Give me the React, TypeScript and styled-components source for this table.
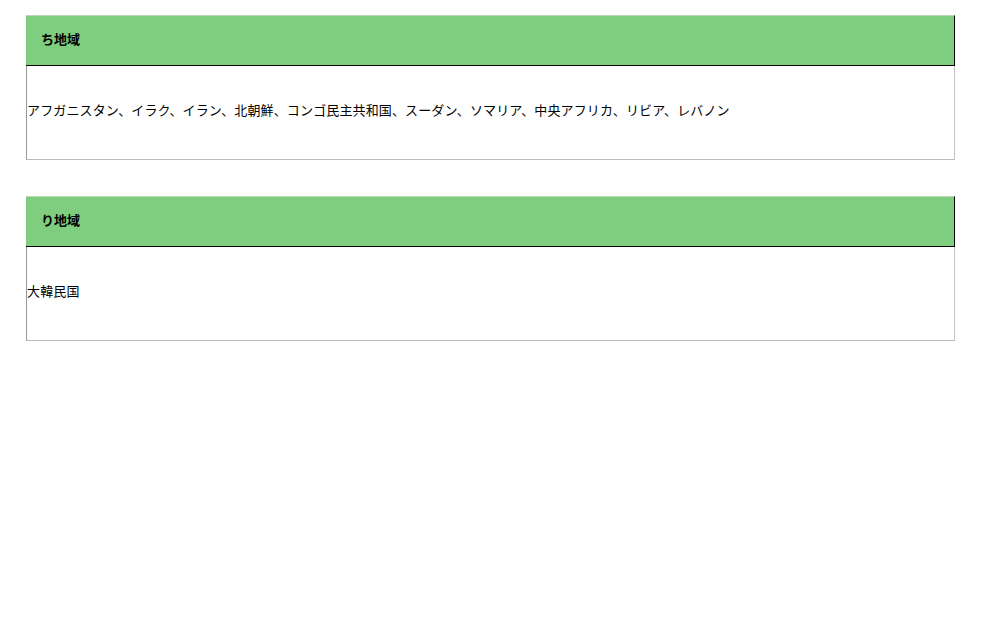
import styled, { createGlobalStyle } from "styled-components";

const GlobalStyle = createGlobalStyle`
  body {
    margin: 0;
    background: #fff;
    font-family: "Noto Sans CJK JP", "Noto Sans", sans-serif;
    color: #000;
  }
`;

const Page = styled.main`
  padding: 15px 0 0 26px;
  display: flex;
  flex-direction: column;
  gap: 36px;
`;

const Region = styled.section`
  width: 929px;
  box-sizing: border-box;
`;

const RegionHeader = styled.h2`
  margin: 0;
  height: 51px;
  box-sizing: border-box;
  padding: 0 0 5px 15px;
  display: flex;
  align-items: center;
  background: #7fcd7f;
  border-top: 1px solid #b9d9b5;
  border-right: 1px solid #000;
  border-bottom: 1px solid #000;
  font-size: 13px;
  font-weight: bold;
`;

const RegionBody = styled.div`
  height: 94px;
  box-sizing: border-box;
  padding-bottom: 4px;
  display: flex;
  align-items: center;
  border-left: 1px solid #999;
  border-right: 1px solid #c4c4c4;
  border-bottom: 1px solid #bbb;
  font-size: 13px;
  line-height: 1.3;
  letter-spacing: 0.13px;
`;

const regions = [
  {
    name: "ち地域",
    countries:
      "アフガニスタン、イラク、イラン、北朝鮮、コンゴ民主共和国、スーダン、ソマリア、中央アフリカ、リビア、レバノン",
  },
  { name: "り地域", countries: "大韓民国" },
];

export default function App() {
  return (
    <>
      <GlobalStyle />
      <Page>
        {regions.map((r) => (
          <Region key={r.name}>
            <RegionHeader>{r.name}</RegionHeader>
            <RegionBody>{r.countries}</RegionBody>
          </Region>
        ))}
      </Page>
    </>
  );
}
